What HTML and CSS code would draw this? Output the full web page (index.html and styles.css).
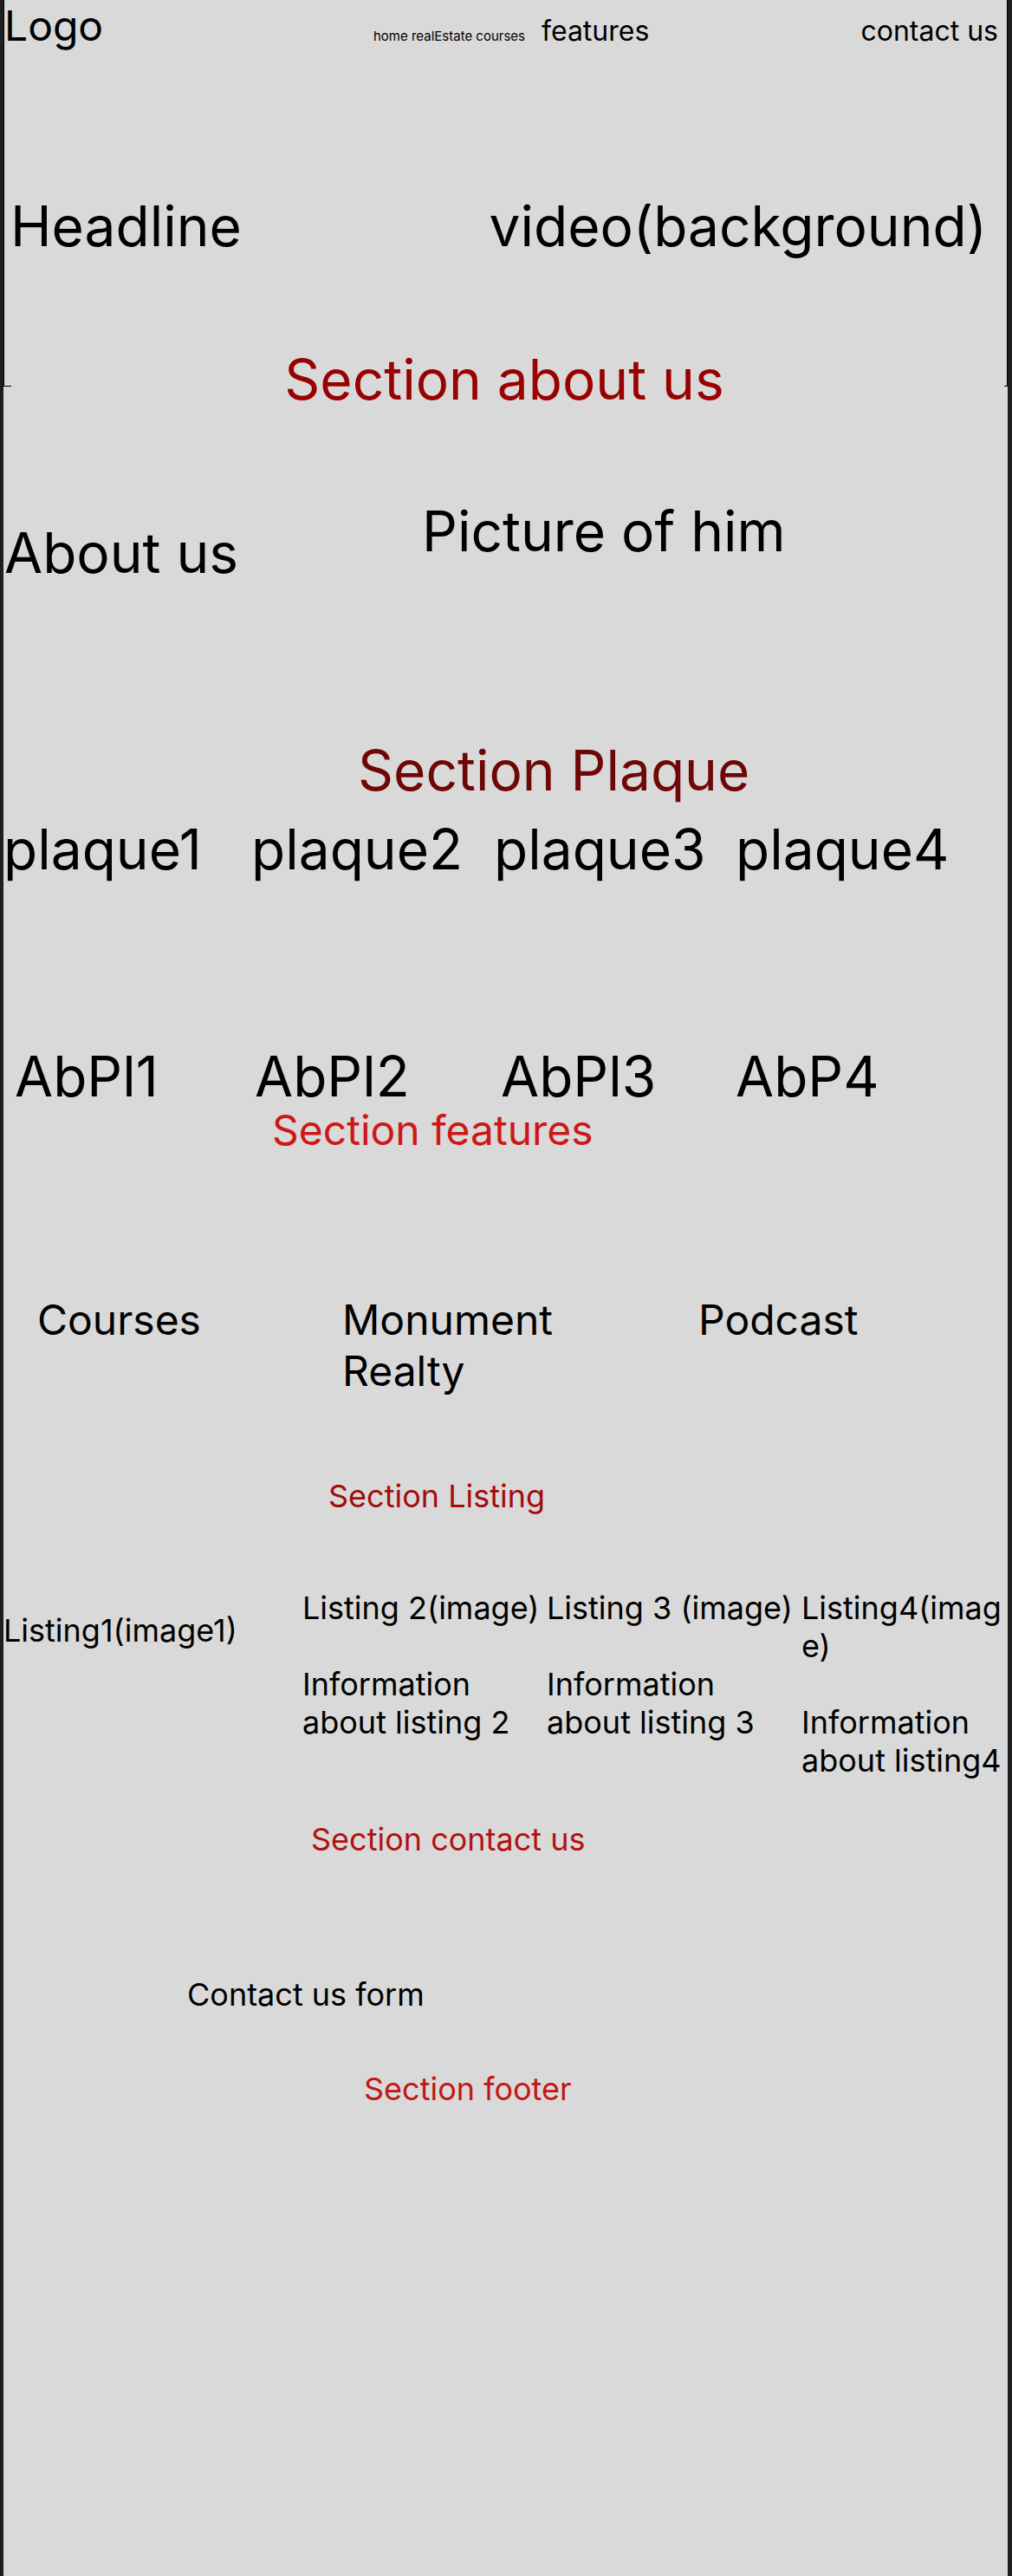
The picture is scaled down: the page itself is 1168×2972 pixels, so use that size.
FILE: index.html
```html
<!DOCTYPE html>
<html lang="en">
<head>
<meta charset="utf-8">
<title>Real Estate – wireframe</title>
<link rel="stylesheet" href="styles.css">
</head>
<body>
<div class="page">
  <section class="hero">
    <header class="topbar">
      <div class="logo">Logo</div>
      <nav class="nav-sub">home realEstate courses</nav>
      <a class="nav-main">features</a>
      <a class="nav-contact">contact us</a>
    </header>
    <div class="hero-row">
      <h1 class="headline">Headline</h1>
      <div class="video">video(background)</div>
    </div>
  </section>

  <h2 class="sec sec-about">Section about us</h2>
  <div class="about-row">
    <div class="about-text">About us</div>
    <div class="about-pic">Picture of him</div>
  </div>

  <h2 class="sec sec-plaque">Section Plaque</h2>
  <div class="plaques">
    <div>plaque1</div>
    <div>plaque2</div>
    <div>plaque3</div>
    <div>plaque4</div>
  </div>
  <div class="abpl">
    <div>AbPl1</div>
    <div>AbPl2</div>
    <div>AbPl3</div>
    <div>AbP4</div>
  </div>

  <h2 class="sec sec-features">Section features</h2>
  <div class="features-row">
    <div class="feat feat-courses">Courses</div>
    <div class="feat feat-realty">Monument Realty</div>
    <div class="feat feat-podcast">Podcast</div>
  </div>

  <h2 class="sec sec-listing">Section Listing</h2>
  <div class="listings">
    <div class="listing listing-1">Listing1(image1)</div>
    <div class="listing">
      <div class="listing-name">Listing 2(image)</div>
      <div class="listing-info">Information about listing 2</div>
    </div>
    <div class="listing">
      <div class="listing-name">Listing 3 (image)</div>
      <div class="listing-info">Information about listing 3</div>
    </div>
    <div class="listing">
      <div class="listing-name">Listing4(image)</div>
      <div class="listing-info">Information about listing4</div>
    </div>
  </div>

  <h2 class="sec sec-contact">Section contact us</h2>
  <div class="contact-form">Contact us form</div>

  <h2 class="sec sec-footer">Section footer</h2>
</div>
</body>
</html>
```

FILE: styles.css
```css
* {
  box-sizing: border-box;
  margin: 0;
  padding: 0;
}

html,
body {
  background: #1e1e1e;
}

body {
  margin: 0;
  font-family: "Inter", "Liberation Sans", sans-serif;
  font-weight: 400;
  color: #000;
}

.page {
  width: 1159px;
  margin-left: 4px;
  min-height: 2972px;
  background: #d9d9d9;
  overflow: hidden;
}

/* ---------- hero ---------- */
.hero {
  height: 446px;
  border: 1px solid #000;
  border-top: 0;
}

.topbar {
  display: flex;
  align-items: baseline;
  padding-right: 10px;
}

.logo {
  font-size: 48px;
  line-height: normal;
  width: 426px;
}

.nav-sub {
  font-size: 15px;
  width: 194px;
}

.nav-main,
.nav-contact {
  font-size: 32px;
}

.nav-contact {
  margin-left: auto;
}

.hero-row {
  display: flex;
  justify-content: space-between;
  margin-top: 163px;
  padding: 0 23px 0 7px;
  font-size: 64px;
}

.headline {
  font-size: 64px;
  font-weight: 400;
}

/* ---------- section headings ---------- */
.sec {
  font-weight: 400;
  line-height: normal;
}

.sec-about {
  font-size: 64px;
  color: #990000;
  margin: -47px 4px 0 9px;
  padding-right: 8px;
  background: #d9d9d9;
  text-align: center;
}

.sec-plaque {
  font-size: 64px;
  color: #6f0707;
  margin-top: 174px;
  padding-left: 409px;
}

.sec-features {
  font-size: 48px;
  color: #cf1717;
  margin-top: -6px;
  padding-left: 310px;
}

.sec-listing {
  font-size: 36px;
  color: #a30c0c;
  margin-top: 93px;
  padding-left: 375px;
}

.sec-contact {
  font-size: 36px;
  color: #b31111;
  margin-top: 47px;
  padding-left: 355px;
}

.sec-footer {
  font-size: 36px;
  color: #c41515;
  margin-top: 65px;
  padding-left: 416px;
}

/* ---------- about ---------- */
.about-row {
  display: flex;
  align-items: flex-start;
  margin-top: 98px;
  padding-left: 1px;
  font-size: 64px;
}

.about-text {
  width: 482px;
  margin-top: 25px;
}

/* ---------- plaques ---------- */
.plaques {
  display: grid;
  grid-template-columns: 286px 280px 279px 1fr;
  margin-top: 14px;
  font-size: 64px;
}

.abpl {
  display: grid;
  grid-template-columns: 277px 284px 271px 1fr;
  margin-top: 185px;
  padding-left: 13px;
  font-size: 64px;
}

/* ---------- features ---------- */
.features-row {
  display: grid;
  grid-template-columns: 352px 411px 1fr;
  margin-top: 160px;
  padding-left: 39px;
  font-size: 48px;
}

.feat-realty {
  max-width: 280px;
}

/* ---------- listings ---------- */
.listings {
  display: grid;
  grid-template-columns: 345px 282px 294px 1fr;
  align-items: start;
  margin-top: 85px;
  font-size: 36px;
}

.listing-1 {
  margin-top: 26px;
}

.listing-name {
  overflow-wrap: anywhere;
}

.listing-info {
  margin-top: 43.6px;
}

/* ---------- contact ---------- */
.contact-form {
  font-size: 36px;
  margin-top: 135px;
  padding-left: 212px;
}
```
